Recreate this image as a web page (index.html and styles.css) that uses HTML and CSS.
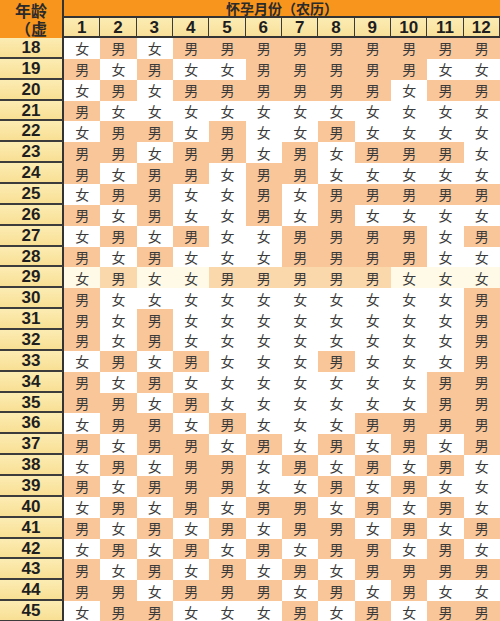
FILE: index.html
```html
<!DOCTYPE html>
<html lang="zh-CN">
<head>
<meta charset="utf-8">
<title>清宫表</title>
<link rel="stylesheet" href="styles.css">
</head>
<body>
<div class="chart">
  <div class="head">
    <div class="age-h"><span>年龄（虚</span></div>
    <div class="title">怀孕月份（农历）</div>
    <div class="mon">1</div><div class="mon">2</div><div class="mon">3</div><div class="mon">4</div><div class="mon">5</div><div class="mon">6</div><div class="mon">7</div><div class="mon">8</div><div class="mon">9</div><div class="mon">10</div><div class="mon">11</div><div class="mon">12</div>
  </div>
  <div class="row"><div class="age">18</div><span class="f">女</span><span class="m">男</span><span class="f">女</span><span class="m">男</span><span class="m">男</span><span class="m">男</span><span class="m">男</span><span class="m">男</span><span class="m">男</span><span class="m">男</span><span class="m">男</span><span class="m">男</span></div>
  <div class="row"><div class="age">19</div><span class="m">男</span><span class="f">女</span><span class="m">男</span><span class="f">女</span><span class="f">女</span><span class="m">男</span><span class="m">男</span><span class="m">男</span><span class="m">男</span><span class="m">男</span><span class="f">女</span><span class="f">女</span></div>
  <div class="row"><div class="age">20</div><span class="f">女</span><span class="m">男</span><span class="f">女</span><span class="m">男</span><span class="m">男</span><span class="m">男</span><span class="m">男</span><span class="m">男</span><span class="m">男</span><span class="f">女</span><span class="m">男</span><span class="m">男</span></div>
  <div class="row"><div class="age">21</div><span class="m">男</span><span class="f">女</span><span class="f">女</span><span class="f">女</span><span class="f">女</span><span class="f">女</span><span class="f">女</span><span class="f">女</span><span class="f">女</span><span class="f">女</span><span class="f">女</span><span class="f">女</span></div>
  <div class="row"><div class="age">22</div><span class="f">女</span><span class="m">男</span><span class="m">男</span><span class="f">女</span><span class="m">男</span><span class="f">女</span><span class="f">女</span><span class="m">男</span><span class="f">女</span><span class="f">女</span><span class="f">女</span><span class="f">女</span></div>
  <div class="row"><div class="age">23</div><span class="m">男</span><span class="m">男</span><span class="f">女</span><span class="m">男</span><span class="m">男</span><span class="f">女</span><span class="m">男</span><span class="f">女</span><span class="m">男</span><span class="m">男</span><span class="m">男</span><span class="f">女</span></div>
  <div class="row"><div class="age">24</div><span class="m">男</span><span class="f">女</span><span class="m">男</span><span class="m">男</span><span class="f">女</span><span class="m">男</span><span class="m">男</span><span class="f">女</span><span class="f">女</span><span class="f">女</span><span class="f">女</span><span class="f">女</span></div>
  <div class="row"><div class="age">25</div><span class="f">女</span><span class="m">男</span><span class="m">男</span><span class="f">女</span><span class="f">女</span><span class="m">男</span><span class="f">女</span><span class="m">男</span><span class="m">男</span><span class="m">男</span><span class="m">男</span><span class="m">男</span></div>
  <div class="row"><div class="age">26</div><span class="m">男</span><span class="f">女</span><span class="m">男</span><span class="f">女</span><span class="f">女</span><span class="m">男</span><span class="f">女</span><span class="m">男</span><span class="f">女</span><span class="f">女</span><span class="f">女</span><span class="f">女</span></div>
  <div class="row"><div class="age">27</div><span class="f">女</span><span class="m">男</span><span class="f">女</span><span class="m">男</span><span class="f">女</span><span class="f">女</span><span class="m">男</span><span class="m">男</span><span class="m">男</span><span class="m">男</span><span class="f">女</span><span class="m">男</span></div>
  <div class="row"><div class="age">28</div><span class="m">男</span><span class="f">女</span><span class="m">男</span><span class="f">女</span><span class="f">女</span><span class="f">女</span><span class="m">男</span><span class="m">男</span><span class="m">男</span><span class="m">男</span><span class="f">女</span><span class="f">女</span></div>
  <div class="row hl"><div class="age">29</div><span class="f">女</span><span class="m">男</span><span class="f">女</span><span class="f">女</span><span class="m">男</span><span class="m">男</span><span class="m">男</span><span class="m">男</span><span class="m">男</span><span class="f">女</span><span class="f">女</span><span class="f">女</span></div>
  <div class="row"><div class="age">30</div><span class="m">男</span><span class="f">女</span><span class="f">女</span><span class="f">女</span><span class="f">女</span><span class="f">女</span><span class="f">女</span><span class="f">女</span><span class="f">女</span><span class="f">女</span><span class="f">女</span><span class="m">男</span></div>
  <div class="row"><div class="age">31</div><span class="m">男</span><span class="f">女</span><span class="m">男</span><span class="f">女</span><span class="f">女</span><span class="f">女</span><span class="f">女</span><span class="f">女</span><span class="f">女</span><span class="f">女</span><span class="f">女</span><span class="m">男</span></div>
  <div class="row"><div class="age">32</div><span class="m">男</span><span class="f">女</span><span class="m">男</span><span class="f">女</span><span class="f">女</span><span class="f">女</span><span class="f">女</span><span class="f">女</span><span class="f">女</span><span class="f">女</span><span class="f">女</span><span class="m">男</span></div>
  <div class="row"><div class="age">33</div><span class="f">女</span><span class="m">男</span><span class="f">女</span><span class="m">男</span><span class="f">女</span><span class="f">女</span><span class="f">女</span><span class="m">男</span><span class="f">女</span><span class="f">女</span><span class="f">女</span><span class="m">男</span></div>
  <div class="row"><div class="age">34</div><span class="m">男</span><span class="f">女</span><span class="m">男</span><span class="f">女</span><span class="f">女</span><span class="f">女</span><span class="f">女</span><span class="f">女</span><span class="f">女</span><span class="f">女</span><span class="m">男</span><span class="m">男</span></div>
  <div class="row"><div class="age">35</div><span class="m">男</span><span class="m">男</span><span class="f">女</span><span class="m">男</span><span class="f">女</span><span class="f">女</span><span class="f">女</span><span class="f">女</span><span class="f">女</span><span class="f">女</span><span class="m">男</span><span class="m">男</span></div>
  <div class="row"><div class="age">36</div><span class="f">女</span><span class="m">男</span><span class="m">男</span><span class="f">女</span><span class="m">男</span><span class="f">女</span><span class="f">女</span><span class="f">女</span><span class="m">男</span><span class="m">男</span><span class="m">男</span><span class="m">男</span></div>
  <div class="row"><div class="age">37</div><span class="m">男</span><span class="f">女</span><span class="m">男</span><span class="m">男</span><span class="f">女</span><span class="m">男</span><span class="f">女</span><span class="m">男</span><span class="f">女</span><span class="m">男</span><span class="f">女</span><span class="m">男</span></div>
  <div class="row"><div class="age">38</div><span class="f">女</span><span class="m">男</span><span class="f">女</span><span class="m">男</span><span class="m">男</span><span class="f">女</span><span class="m">男</span><span class="f">女</span><span class="m">男</span><span class="f">女</span><span class="m">男</span><span class="f">女</span></div>
  <div class="row"><div class="age">39</div><span class="m">男</span><span class="f">女</span><span class="m">男</span><span class="m">男</span><span class="m">男</span><span class="f">女</span><span class="f">女</span><span class="m">男</span><span class="f">女</span><span class="m">男</span><span class="f">女</span><span class="f">女</span></div>
  <div class="row"><div class="age">40</div><span class="f">女</span><span class="m">男</span><span class="f">女</span><span class="m">男</span><span class="f">女</span><span class="m">男</span><span class="m">男</span><span class="f">女</span><span class="m">男</span><span class="f">女</span><span class="m">男</span><span class="f">女</span></div>
  <div class="row"><div class="age">41</div><span class="m">男</span><span class="f">女</span><span class="m">男</span><span class="f">女</span><span class="m">男</span><span class="f">女</span><span class="m">男</span><span class="m">男</span><span class="f">女</span><span class="m">男</span><span class="f">女</span><span class="m">男</span></div>
  <div class="row"><div class="age">42</div><span class="f">女</span><span class="m">男</span><span class="f">女</span><span class="m">男</span><span class="f">女</span><span class="m">男</span><span class="f">女</span><span class="m">男</span><span class="m">男</span><span class="f">女</span><span class="m">男</span><span class="f">女</span></div>
  <div class="row"><div class="age">43</div><span class="m">男</span><span class="f">女</span><span class="m">男</span><span class="f">女</span><span class="m">男</span><span class="f">女</span><span class="m">男</span><span class="f">女</span><span class="m">男</span><span class="m">男</span><span class="m">男</span><span class="m">男</span></div>
  <div class="row"><div class="age">44</div><span class="m">男</span><span class="m">男</span><span class="f">女</span><span class="m">男</span><span class="m">男</span><span class="m">男</span><span class="f">女</span><span class="m">男</span><span class="f">女</span><span class="m">男</span><span class="f">女</span><span class="f">女</span></div>
  <div class="row"><div class="age">45</div><span class="f">女</span><span class="m">男</span><span class="m">男</span><span class="f">女</span><span class="f">女</span><span class="f">女</span><span class="m">男</span><span class="f">女</span><span class="m">男</span><span class="f">女</span><span class="m">男</span><span class="m">男</span></div>
</div>
</body>
</html>
```
FILE: styles.css
```css
html, body {
  margin: 0;
  padding: 0;
  background: #ffffff;
}
body {
  width: 500px;
  height: 621px;
  overflow: hidden;
  font-family: "Liberation Sans", "Noto Sans CJK SC", sans-serif;
}
.chart {
  width: 500px;
  display: flex;
  flex-direction: column;
}
.head {
  display: grid;
  grid-template-columns: 64px repeat(12, 1fr);
  grid-template-rows: 18px 20px;
}
.age-h {
  grid-row: 1 / 3;
  background: #f7951d;
  border-right: 2px solid #333333;
  display: flex;
  justify-content: center;
  color: #2a2a2a;
  font: bold 16px/18px "Noto Sans CJK SC", sans-serif;
  padding-top: 1px;
}
.age-h span {
  width: 35px;
  text-align: center;
}
.title {
  grid-column: 2 / -1;
  background: #f7951d;
  border-bottom: 2px solid #333333;
  display: flex;
  align-items: center;
  justify-content: center;
  color: #2a2a2a;
  font: bold 14px/16px "Noto Sans CJK SC", sans-serif;
}
.mon {
  background: linear-gradient(#fcecb3, #f8e09a);
  border-right: 1px solid #3a3a3a;
  border-bottom: 2px solid #333333;
  text-align: center;
  color: #1e1e1e;
  font: bold 17px/19px "Liberation Sans", sans-serif;
}
.row {
  display: grid;
  grid-template-columns: 64px repeat(12, 1fr);
  height: 20.86px;
}
.age {
  background: linear-gradient(#fcecb3, #f8df94);
  border-right: 2px solid #333333;
  border-bottom: 2px solid #3c3c3c;
  display: flex;
  align-items: center;
  justify-content: center;
  color: #1f1f1f;
  font: bold 17px/1 "Liberation Sans", sans-serif;
}
.row span {
  display: flex;
  align-items: center;
  justify-content: center;
  color: #3a3a3a;
  font: 14px/1 "Noto Sans CJK SC", sans-serif;
}
.m {
  background: #f8c699;
}
.f {
  background: #ffffff;
}
.hl .m {
  background: #fbd8ab;
}
.hl .f {
  background: #fffae8;
}
```
